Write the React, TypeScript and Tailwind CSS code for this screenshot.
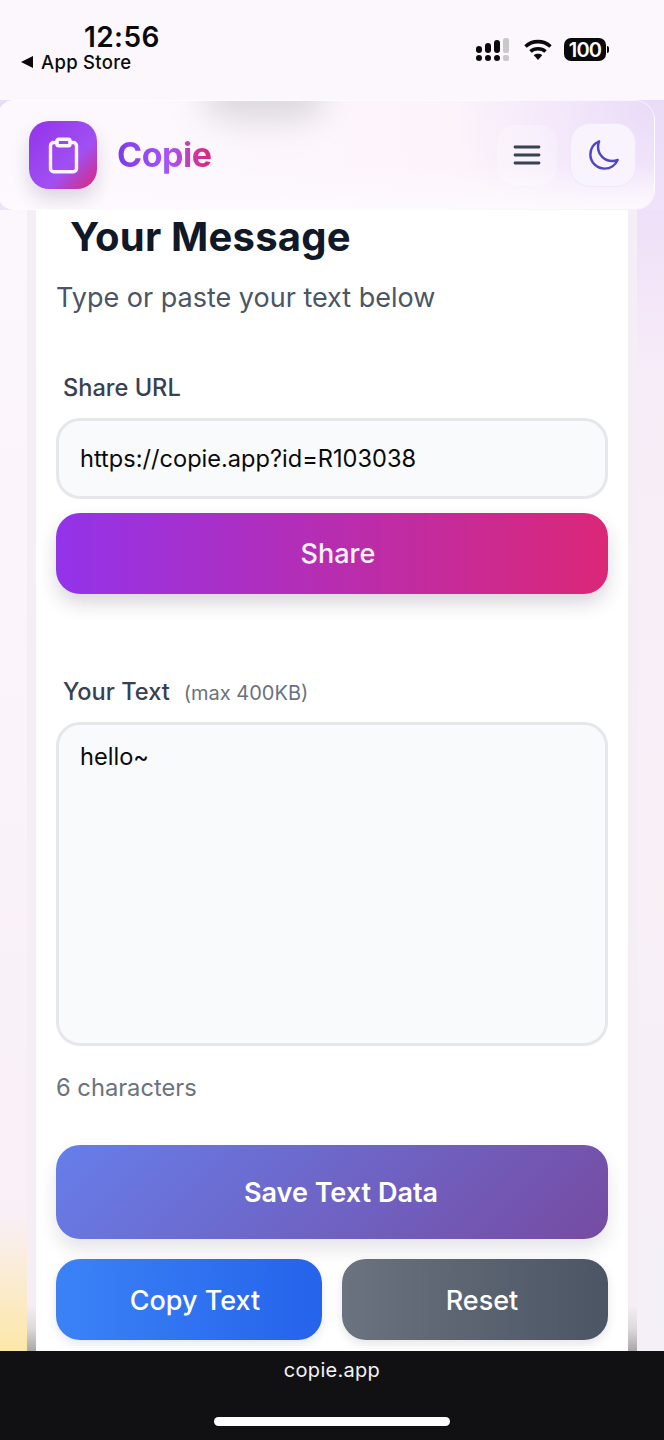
import { Clipboard } from "lucide-react";

function Signal() {
  const dark = "#0a0a0a";
  const light = "#c9c9cb";
  return (
    <svg width="34" height="23" viewBox="0 0 34 23" aria-hidden="true">
      <rect x="0" y="8" width="6" height="7" rx="3" fill={dark} />
      <rect x="9" y="5" width="6" height="10" rx="3" fill={dark} />
      <rect x="18" y="2" width="6" height="13" rx="3" fill={dark} />
      <rect x="27" y="0" width="6" height="15" rx="2" fill={light} />
      <rect x="0" y="17" width="6" height="6" rx="3" fill={dark} />
      <rect x="9" y="17" width="6" height="6" rx="3" fill={dark} />
      <rect x="18" y="17" width="6" height="6" rx="3" fill={dark} />
      <rect x="27" y="17" width="6" height="6" rx="2" fill={light} />
    </svg>
  );
}

function Wifi() {
  return (
    <svg width="28" height="22" viewBox="0 0 28 22" aria-hidden="true">
      <path d="M1.5 7.5 C8.5 1 19.5 1 26.5 7.5" fill="none" stroke="#0a0a0a" strokeWidth="3.6" />
      <path d="M6.5 12.5 C10.5 8.8 17.5 8.8 21.5 12.5" fill="none" stroke="#0a0a0a" strokeWidth="3.6" />
      <path d="M9.8 16.2 C12 14.3 16 14.3 18.2 16.2 L14 21 Z" fill="#0a0a0a" />
    </svg>
  );
}

function MenuIcon() {
  return (
    <svg width="28" height="22" viewBox="0 0 28 22" aria-hidden="true">
      <path d="M2 3 H26 M2 11 H26 M2 19 H26" fill="none" stroke="#374151" strokeWidth="2.8" strokeLinecap="round" />
    </svg>
  );
}

function MoonIcon() {
  return (
    <svg width="35" height="35" viewBox="0 0 24 24" aria-hidden="true">
      <path
        d="M21.752 15.002A9.718 9.718 0 0118 15.75c-5.385 0-9.75-4.365-9.75-9.75 0-1.33.266-2.597.748-3.752A9.753 9.753 0 003 11.25C3 16.635 7.365 21 12.75 21a9.753 9.753 0 009.002-5.998z"
        fill="none"
        stroke="#4f46c8"
        strokeWidth="1.7"
        strokeLinecap="round"
        strokeLinejoin="round"
      />
    </svg>
  );
}

export default function App() {
  return (
    <div className="relative flex h-[1440px] w-[664px] flex-col overflow-hidden bg-[#fcf6fd] font-['Inter',sans-serif]">
      {/* Status bar */}
      <div className="flex h-[100px] shrink-0 items-start justify-between bg-[#fcf6fd]">
        <div className="flex flex-col">
          <span className="mt-[20px] ml-[84px] text-[28px] leading-[34px] font-semibold tracking-[0.4px] text-[#0a0a0a]">12:56</span>
          <span className="-mt-[4px] ml-[21px] flex items-center gap-[8px] text-[18.5px] leading-[24px] font-medium tracking-[0.3px] text-[#0a0a0a]">
            <span className="h-0 w-0 border-y-[6px] border-r-[12px] border-y-transparent border-r-[#0a0a0a]" />
            App Store
          </span>
        </div>
        <div className="mt-[38px] mr-[55px] flex items-center">
          <Signal />
          <span className="ml-[14px]"><Wifi /></span>
          <span className="ml-[12px] flex items-center">
            <span className="flex h-[23px] w-[42px] items-center justify-center rounded-[7px] bg-[#0a0a0a] text-[20px] leading-none font-semibold tracking-[-0.8px] text-white">100</span>
            <span className="ml-[1px] h-[7px] w-[2px] rounded-r-full bg-[#0a0a0a]" />
          </span>
        </div>
      </div>

      {/* Page */}
      <div className="flex min-h-0 flex-1 flex-col">
        <div className="flex h-[110px] shrink-0 bg-[linear-gradient(180deg,#e9dcf8,#efe2f9)]">
          <div className="relative -ml-[2px] flex-1 overflow-hidden rounded-[20px] rounded-l-[16px] border border-white/50 mr-[9px] bg-[radial-gradient(circle_at_100%_0%,#e9dbf8_0px,#f3e7fa_90px,#fdf4fb_210px,#fcf8fd_520px)]">
            <div className="absolute inset-x-0 bottom-0 h-[44px] bg-[linear-gradient(180deg,transparent,#fdf9fe)]" />
            <div className="absolute -top-[32px] left-[205px] h-[50px] w-[120px] rounded-full bg-[#a9a7ad]/40 blur-[16px]" />
            <div className="relative flex h-full items-center pl-[30px]">
              <div className="flex h-[68px] w-[68px] items-center justify-center rounded-[20px] bg-[linear-gradient(135deg,#9333ea_0%,#a050f2_62%,#db2777_100%)] shadow-[0_10px_18px_rgba(60,40,90,0.16)]">
                <Clipboard size={39} strokeWidth={2.1} color="#fdf4ff" />
              </div>
              <span className="ml-[20px] bg-[linear-gradient(90deg,#7c3aed_0%,#a855f7_55%,#db2777_100%)] bg-clip-text text-[34px] leading-[44px] font-bold tracking-[-0.5px] text-transparent">Copie</span>
              <div className="ml-auto flex items-center gap-[13px] pr-[18px]">
                <div className="flex h-[60px] w-[60px] items-center justify-center rounded-[18px] bg-white/25">
                  <MenuIcon />
                </div>
                <div className="flex h-[64px] w-[66px] items-center justify-center rounded-[20px] border border-[#f1e8f7] bg-[#f8f3fc]">
                  <MoonIcon />
                </div>
              </div>
            </div>
          </div>
        </div>

        <div className="flex min-h-0 flex-1">
          <div className="w-[27px] shrink-0 bg-[linear-gradient(180deg,#fcf6fd_0%,#f9f0f7_88%,#fce7a8_100%)]" />
          <div className="flex min-h-0 flex-1 flex-col bg-[linear-gradient(180deg,#f6eef6_0%,#f5eef5_96%,#dedadc_98%,#a9a7a8_100%)] px-[9px]">
            <div className="flex min-h-0 flex-1 flex-col overflow-hidden bg-white px-[20px]">
              <h1 className="mt-[2px] ml-[14px] text-[40px] leading-[50px] font-bold tracking-[0.2px] text-[#111827]">Your Message</h1>
              <p className="mt-[18px] text-[27px] leading-[36px] text-[#4b5563]">Type or paste your text below</p>

              <label className="mt-[56px] ml-[7px] text-[23.6px] leading-[32px] font-medium text-[#374151]">Share URL</label>
              <div className="mt-[14px] flex h-[81px] shrink-0 items-center rounded-[24px] border-[3px] border-[#e5e7eb] bg-[#f9fafb] pl-[21px] text-[23.6px] text-[#0a0a0a]">
                https://copie.app?id=R103038
              </div>
              <button className="mt-[14px] flex h-[81px] shrink-0 items-center justify-center rounded-[24px] bg-[linear-gradient(90deg,#9333ea,#db2777)] pt-[2px] pl-[12px] text-[27px] font-medium text-[#fdf2fb] shadow-[0_10px_18px_rgba(60,40,70,0.18)]">
                Share
              </button>

              <div className="mt-[82px] ml-[7px] flex items-baseline gap-[14px]">
                <span className="text-[23.6px] leading-[32px] font-medium text-[#374151]">Your Text</span>
                <span className="text-[20px] leading-[32px] text-[#6b7280]">(max 400KB)</span>
              </div>
              <div className="mt-[13px] h-[324px] shrink-0 rounded-[24px] border-[3px] border-[#e5e7eb] bg-[#f9fafb] pt-[16px] pl-[21px] text-[23.6px] leading-[32px] text-[#0a0a0a]">
                hello~
              </div>
              <p className="mt-[26px] text-[23.7px] leading-[32px] text-[#6b7280]">6 characters</p>

              <button className="mt-[41px] flex h-[94px] shrink-0 items-center justify-center rounded-[24px] bg-[linear-gradient(135deg,#667eea,#764ba2)] pt-[2px] pl-[18px] text-[27px] font-semibold text-white shadow-[0_10px_18px_rgba(40,40,70,0.12)]">
                Save Text Data
              </button>
              <div className="mt-[20px] grid shrink-0 grid-cols-2 gap-[20px]">
                <button className="flex h-[81px] items-center justify-center rounded-[24px] bg-[linear-gradient(90deg,#3b82f6,#2563eb)] pt-[3px] pl-[12px] text-[27px] font-medium text-white shadow-[0_4px_10px_rgba(40,60,120,0.12)]">
                  Copy Text
                </button>
                <button className="flex h-[81px] items-center justify-center rounded-[24px] bg-[linear-gradient(90deg,#6b7280,#4b5563)] pt-[3px] pl-[14px] text-[27px] font-medium text-white shadow-[0_4px_10px_rgba(40,40,60,0.12)]">
                  Reset
                </button>
              </div>
            </div>
          </div>
          <div className="w-[27px] shrink-0 bg-[linear-gradient(180deg,#eee0f8_0%,#f7edf8_15%,#f9eff7_50%,#f5eff8_100%)]" />
        </div>
      </div>

      {/* Browser address strip */}
      <div className="flex h-[89px] shrink-0 flex-col items-center bg-[#111114]">
        <span className="mt-[6px] text-[20px] leading-[26px] tracking-[0.3px] text-[#f4f4f5]">copie.app</span>
        <span className="mt-[34px] h-[9px] w-[236px] rounded-full bg-white" />
      </div>
    </div>
  );
}
